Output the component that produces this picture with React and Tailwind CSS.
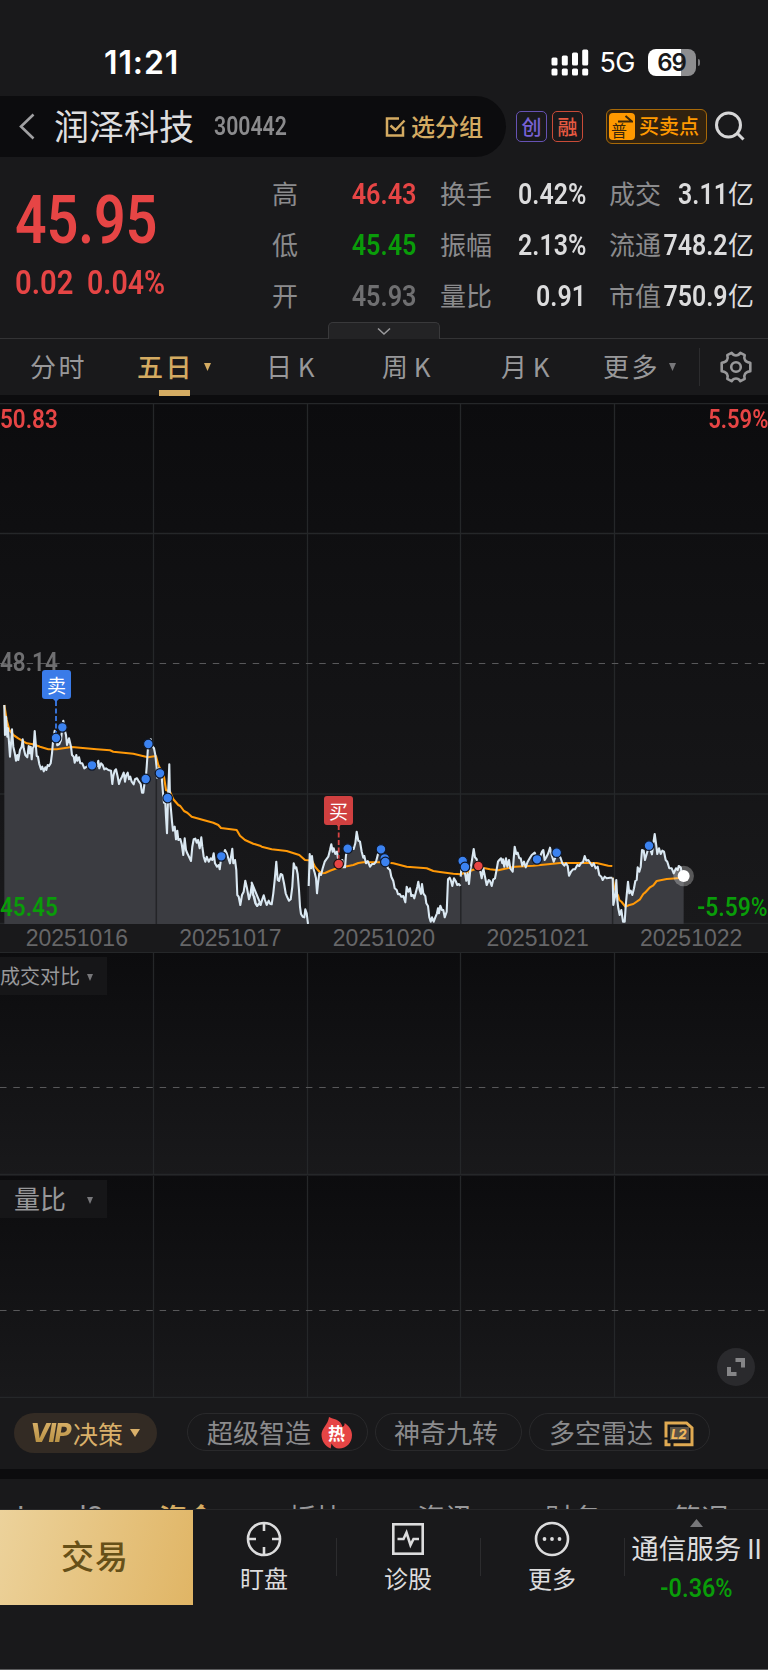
import React from 'react';

const parse = (dx, dy, text) =>
  text.trim().split(/\s+/).map((pair) => {
    const [x, y] = pair.split(',').map(Number);
    return [dx + x / 3, dy + y / 3];
  });

const toPath = (points) =>
  'M' + points.map(([x, y]) => `${x.toFixed(1)} ${y.toFixed(1)}`).join('L');

const FLOOR = 521;

const SESSIONS = [
  parse(0, 237, `13,195 15,285 18,230 22,290 24,265 28,320 30,350 34,300 36,268 40,320 44,338 48,362 52,345 55,360 60,330 65,320 68,298 71,325 76,345 82,352 86,318 89,340 92,320 95,358 98,325 101,320 104,273 107,310 110,348 114,350 118,372 123,388 127,380 131,394 136,382 139,390 143,375 147,378 152,370 156,340 159,305 164,272 168,295 172,316 178,312 183,300 187,262 190,242 194,270 198,285 201,315 207,295 213,320 216,345 221,350 224,368 229,345 232,362 237,352 241,370 247,370 253,385 260,380 268,376 276,376 284,385 291,378 295,362 298,385 303,370 308,375 313,388 318,385 325,390 333,392 337,432 340,408 344,392 348,388 353,410 357,432 361,420 366,410 371,398 375,425 379,405 383,398 387,418 391,410 395,425 401,433 405,418 411,415 417,425 422,432 426,458 430,458 433,435 437,417 440,380 443,335 445,312 452,298 456,318 462,325 466,345 470,385`),
  parse(0, 237, `470,385 471,413 476,385 480,400 485,410 489,460 492,488 495,470 498,530 501,580 504,475 508,373 510,480 513,510 516,545 519,572 524,560 528,598 532,572 535,600 541,597 545,612 550,645 554,595 558,630 562,640 567,650 573,663 577,620 581,598 586,596 590,608 594,600 599,625 604,592 607,620 611,650 616,665 620,650 626,665 632,655 637,660 641,640 645,670 651,680 656,675 659,688 664,650 670,645 675,630 680,640 685,655 690,670 697,626 700,670 705,660 709,690 712,765 716,770 721,795 726,765 731,755 736,722 741,745 747,778 751,765 756,730 760,765 766,790 771,798 780,788`).concat(
    parse(250, 377, `5,308 9,345 13,350 17,370 22,378 27,370 32,375 37,358 41,346 45,360 50,375 56,362 61,372 65,373 70,340 74,300 79,245 83,300 87,303 92,282 97,285 102,310 107,340 112,352 117,362 122,358 127,320 131,250 136,265 139,262 143,283 147,330 150,380 153,402 158,410 163,412 166,388 170,400 174,432`)),
  parse(250, 377, `176,318 179,222 183,265 186,228 190,265 194,278 198,295 201,340 204,310 208,280 213,285 218,265 224,245 229,238 235,230 240,210 244,193 248,215 251,205 256,222 261,215 266,250 272,240 277,240 280,262 285,262 288,225 293,205 300,200 311,207 316,190 320,155 325,182 330,185 335,215 340,233 343,228 348,250 353,243 360,260 366,252 372,252 378,245 384,222 393,208 400,225 405,240 409,250 414,265 420,270 424,290 430,303 434,325 440,330 444,343 449,342 454,350 460,348 466,367 470,320 475,335 480,325 484,348 489,345 493,355 498,335 502,320 505,305 509,330 513,342 516,312 520,340 526,348 529,370 534,378 538,412 542,425 546,412 551,425 556,412 561,400 564,385 567,400 571,377 576,390 580,390 584,412 590,395 594,298 599,293 604,305 607,318 612,295 617,303 622,315 627,312 631,318`),
  parse(250, 377, `632,290 636,245 640,265 645,280 649,302 653,280 657,312 661,270 666,240 671,207 675,232 680,238 685,258 690,270 695,295 700,265 705,290 710,315 716,300 720,303 725,318 730,298 735,295 740,268 744,245 748,240`).concat(
    parse(500, 377, `3,235 7,250 9,238 13,260 18,235 22,260 27,240 31,265 38,275 41,235 44,200 49,222 53,218 58,235 62,235 67,257 72,245 77,262 83,245 89,235 95,225 104,218 111,238 118,235 126,215 130,210 134,240 139,232 145,220 150,203 155,225 161,245 167,230 175,220 182,235 187,250 193,257 198,250 203,258 207,287 213,275 219,268 225,268 232,255 238,258 244,248 249,247 254,228 259,242 265,240 271,250 276,258 281,250 287,265 293,260 298,285 304,290 308,300 314,290 320,295 330,293 337,293`)),
  parse(500, 377, `338,293 340,375 345,350 349,300 352,360 355,385 359,405 364,390 369,425 374,425 377,378 380,345 384,305 388,340 392,332 397,345 402,325 406,303 410,300 413,262 418,275 422,260 426,210 431,212 435,240 440,222 447,197 456,223 460,190 464,162 468,190 472,222 477,205 482,222 487,212 492,215 497,240 502,245 508,265 515,265 521,280 528,265 533,270 536,258 542,262 547,290 551,288`),
];

const AVERAGES = [
  parse(0, 237, `13,195 20,240 28,270 40,285 55,295 80,310 100,313 120,320 145,328 170,328 215,321 240,323 290,328 330,331 340,335 400,341 444,352 468,348 475,375 485,395 492,410 498,450 510,455 520,478 535,495 541,498 552,513 562,518 575,530 610,540 640,548 655,555 663,564 710,570 720,587 735,600 760,611 780,617`).concat(
    parse(250, 377, `35,200 65,208 110,213 148,225 165,240 176,241 185,240 195,260 205,272 215,280 225,279 240,272 260,265 310,255 325,249 340,247 400,247 430,250 470,260 530,265 550,273 570,276 610,281 632,283 650,277 690,262 720,268 745,271`),
    parse(500, 377, `15,266 45,260 100,257 180,249 290,249 325,257 337,258`)),
  parse(500, 377, `338,293 342,320 350,340 354,346 358,360 365,366 376,380 386,376 400,372 420,358 430,342 435,338 450,322 460,316 470,303 500,297 551,293`),
];

const BLUE_MARKS = [
  ...parse(0, 237, '168,294 187,262 276,376 437,417 445,312 480,400 503,474 664,649'),
  ...parse(250, 377, '293,206 393,208 404,235 406,246 638,243 645,261'),
  ...parse(500, 377, '111,238 170,218 447,197'),
];
const RED_MARKS = parse(250, 377, '266,252 685,258');
const GRID_X = [153.5, 307.5, 460.5, 614.5];

function Num({ children, className = '' }) {
  return (
    <span className={`inline-block whitespace-nowrap font-[Roboto,sans-serif] font-semibold ${className}`}>
      {children}
    </span>
  );
}

function StatusBar() {
  return (
    <div className="flex h-24 shrink-0 items-start justify-between pl-[104px] pr-[68px] font-[Inter,sans-serif] text-white">
      <span className="mt-[43px] text-[32px] font-semibold leading-10 tracking-[0.9px]">11:21</span>
      <div className="mt-[42px] flex h-10 items-center">
        <svg width="38" height="27" viewBox="0 0 38 27" fill="#fff">
          <rect x="0.5" y="8.5" width="6" height="8" rx="1.5" />
          <rect x="10.8" y="6.5" width="6" height="10" rx="1.5" />
          <rect x="21" y="3.5" width="6" height="13" rx="1.5" />
          <rect x="31.2" y="0.5" width="6" height="16" rx="1.5" />
          <rect x="0.5" y="19.5" width="6" height="7" rx="1.5" />
          <rect x="10.8" y="19.5" width="6" height="7" rx="1.5" />
          <rect x="21" y="19.5" width="6" height="7" rx="1.5" />
          <rect x="31.2" y="19.5" width="6" height="7" rx="1.5" />
        </svg>
        <span className="ml-[11px] mt-[2px] w-[36px] text-[27px] leading-10 tracking-[-0.6px]">5G</span>
        <div className="ml-3 flex h-[27px] w-12 items-center justify-center rounded-[8px] bg-[linear-gradient(90deg,#fff_69%,#8d8d8f_69%)]">
          <span className="text-[24px] font-semibold leading-[27px] tracking-[-1px] text-[#19191b]">69</span>
        </div>
        <div className="ml-[2px] h-[7px] w-[2.5px] rounded-r-full bg-[#77777a]" />
      </div>
    </div>
  );
}

function Header() {
  return (
    <div className="flex h-[61px] shrink-0 items-center">
      <div className="flex h-full w-[506px] items-center rounded-r-full bg-[#0c0c0e]">
        <svg className="ml-[18px]" width="17" height="27" viewBox="0 0 17 27" fill="none" stroke="#a0a0a2" strokeWidth="2.6">
          <path d="M15.5 1.5 3 13.5 15.5 25.5" />
        </svg>
        <span className="ml-[19px] w-[140px] pb-[4px] text-[35px] leading-[57px] text-[#dededf]">润泽科技</span>
        <Num className="ml-5 w-[86px] origin-left scale-x-[0.85] text-[25px] leading-[61px] text-[#8b8b8d]">300442</Num>
        <svg className="ml-[84px]" width="22" height="22" viewBox="0 0 22 22" fill="none" stroke="#d4ab62" strokeWidth="2.5">
          <path d="M15 2.5H3v17h16v-9" />
          <path d="m6.500 9.500 5 4.500 9-9.500" />
        </svg>
        <span className="ml-[5px] pb-[2px] text-[24px] font-medium leading-[59px] text-[#d4ab62]">选分组</span>
      </div>
      <div className="ml-[10px] flex h-[31px] w-[31px] items-center justify-center rounded-[5px] border-[1.5px] border-[#6652b4] text-[20px] font-medium leading-[28px] text-[#7861d4]">创</div>
      <div className="ml-[5px] flex h-[31px] w-[31px] items-center justify-center rounded-[5px] border-[1.5px] border-[#c94b38] text-[20px] font-medium leading-[28px] text-[#e85a42]">融</div>
      <div className="ml-[23px] flex h-[35px] w-[101px] items-center rounded-[6px] border-[1.5px] border-[#a86908] bg-[#31220f] pl-[2px]">
        <div className="relative h-[27px] w-[26px] rounded-[4px] bg-[#ff9900] text-[#3a280c]">
          <span className="absolute left-[2px] top-[9px] text-[16px] leading-4">普</span>
          <svg className="absolute right-[2px] top-[2px]" width="15" height="8" viewBox="0 0 15 8" fill="none" stroke="#3a280c" strokeWidth="2"><path d="M0 6.500h14L7.500 1" /></svg>
        </div>
        <span className="ml-[4px] pb-[1px] text-[20px] font-medium leading-8 text-[#ff9900]">买卖点</span>
      </div>
      <svg className="ml-2" width="30" height="31" viewBox="0 0 30 31" fill="none" stroke="#d6d6d7" strokeWidth="3">
        <circle cx="13.500" cy="14" r="12" /><path d="m22 22 6.500 6.500" />
      </svg>
    </div>
  );
}

const STATS = [
  ['高', '46.43', 'text-[#e64545]', '换手', '0.42%', '成交', '3.11'],
  ['低', '45.45', 'text-[#0a9c0a]', '振幅', '2.13%', '流通', '748.2'],
  ['开', '45.93', 'text-[#6f6f71]', '量比', '0.91', '市值', '750.9'],
];

function Quote() {
  return (
    <div className="relative flex h-[182px] shrink-0 border-b border-[#333335]">
      <div className="flex w-[272px] flex-col pl-[15px] text-[#e64545]">
        <Num className="mt-[26px] origin-left scale-x-[0.84] text-[66px] leading-[76px]">45.95</Num>
        <div className="mt-[2px] flex">
          <Num className="w-[72px] origin-left scale-x-[0.86] text-[34px] leading-[42px]">0.02</Num>
          <Num className="origin-left scale-x-[0.84] text-[34px] leading-[42px]">0.04%</Num>
        </div>
      </div>
      <div className="mt-[10px] flex flex-col text-[26px] leading-[51px] text-[#8b8b8d]">
        {STATS.map(([a, av, color, b, bv, c, cv]) => (
          <div key={a} className="flex h-[51px] items-baseline">
            <span className="w-[60px]">{a}</span>
            <span className={`w-[85px] text-right ${color}`}><Num className="origin-right scale-x-[0.87] text-[29px]">{av}</Num></span>
            <span className="ml-[23px] w-[61px]">{b}</span>
            <span className="w-[85px] text-right text-[#dcdcdd]"><Num className="origin-right scale-x-[0.86] text-[29px]">{bv}</Num></span>
            <span className="ml-[23px] w-[54px]">{c}</span>
            <span className="flex w-[91px] items-baseline justify-end text-[#dcdcdd]">
              <Num className="origin-right scale-x-[0.86] text-[29px]">{cv}</Num>
              <span className="w-[26px]">亿</span>
            </span>
          </div>
        ))}
      </div>
      <div className="absolute bottom-[-1px] left-[328px] flex h-[17px] w-28 items-center justify-center rounded-t-[5px] border border-b-0 border-[#39393b] bg-[#232325]">
        <svg width="14" height="9" viewBox="0 0 14 9" fill="none" stroke="#9a9a9c" strokeWidth="1.6"><path d="m1 1.500 6 5.500 6-5.500" /></svg>
      </div>
    </div>
  );
}

function Caret({ className = '' }) {
  return <svg className={className} width="7" height="8" viewBox="0 0 7 8" fill="currentColor"><path d="M0 0h7L3.500 8z" /></svg>;
}

function PeriodTabs() {
  return (
    <div className="flex h-[56px] shrink-0 items-center text-[26px] leading-[54px] tracking-[2.5px] text-[#98989a]">
      <span className="ml-[30px] w-[107px] pb-[2px]">分时</span>
      <div className="relative flex w-[129px] items-center text-[#d4ab62]">
        <span className="pb-[2px] font-medium">五日</span>
        <Caret className="ml-[10px]" />
        <div className="absolute bottom-[-1px] left-[22px] h-[6px] w-[31px] bg-[#d4ab62]" />
      </div>
      <span className="w-[116px] whitespace-pre pb-[2px] tracking-[0]">日 K</span>
      <span className="w-[119px] whitespace-pre pb-[2px] tracking-[0]">周 K</span>
      <span className="w-[102px] whitespace-pre pb-[2px] tracking-[0]">月 K</span>
      <div className="flex w-[96px] items-center">
        <span className="pb-[2px]">更多</span>
        <Caret className="ml-[9px] text-[#77777a]" />
      </div>
      <div className="h-[38px] w-px bg-[#2c2c2e]" />
      <svg className="ml-[20px]" width="32" height="32" viewBox="0 0 32 32" fill="none" stroke="#98989a" strokeWidth="2.600" strokeLinejoin="round">
        <path d="M11.600 1.800c1.200 1.900 2.500 2.700 4.400 2.700s3.200-.8 4.400-2.700l4.300 2.400c-.8 2.300-.5 3.600.4 5 .9 1.400 2 2.200 5.200 2.500v8.600c-3.200.3-4.300 1.100-5.200 2.500-.9 1.400-1.200 2.700-.4 5l-4.300 2.400c-1.200-1.900-2.500-2.700-4.400-2.700s-3.200.8-4.400 2.700l-4.300-2.400c.8-2.300.5-3.600-.4-5-.9-1.400-2-2.200-5.200-2.500v-8.600c3.200-.3 4.300-1.100 5.200-2.500.9-1.400 1.200-2.700.4-5z" />
        <circle cx="16" cy="16" r="4.800" />
      </svg>
    </div>
  );
}

function Flag({ children, className }) {
  return (
    <div className={`absolute flex h-[29px] w-[29px] items-center justify-center rounded-[3px] text-[19px] leading-[28px] text-white ${className}`}>
      {children}
    </div>
  );
}

function PriceChart() {
  const last = SESSIONS[4][SESSIONS[4].length - 1];
  return (
    <div className="relative h-[521px] shrink-0 bg-linear-to-b from-[#0c0c0e] to-[#19191b] text-[25px] leading-[28px]">
      <svg className="block" width="768" height="521" viewBox="0 0 768 521" fill="none">
        <g stroke="#252729" strokeWidth="1.3">
          <path d="M0 .5H768M0 130.500H768M0 391H768M0 520.500H768" />
          {GRID_X.map((x) => <path key={x} d={`M${x} 0V521`} />)}
        </g>
        <path d="M0 260.500H768" stroke="#58585a" strokeWidth="1.200" strokeDasharray="6.500 6.800" />
        {SESSIONS.map((points, i) => (
          <path key={i} fill="#3b3c41" d={`${toPath(points)}L${points[points.length - 1][0]} ${FLOOR}L${points[0][0]} ${FLOOR}Z`} />
        ))}
        <path d="M156.300 362V521M307.800 483V521M460.800 483V521M612.600 475V521" stroke="#242528" strokeWidth="1.500" />
        <g stroke="#ff9908" strokeWidth="2.100" strokeLinejoin="round">
          {AVERAGES.map((points, i) => <path key={i} d={toPath(points)} />)}
        </g>
        <g stroke="#dae8f2" strokeWidth="2.100" strokeLinejoin="round">
          {SESSIONS.map((points, i) => <path key={i} d={toPath(points)} />)}
        </g>
        <path d="M56 298V331" stroke="#3a7be8" strokeWidth="1.800" strokeDasharray="5 2.500" />
        <path d="M53 296h6l-3 3z" fill="#3a7be8" />
        <path d="M338.700 422V457" stroke="#d64343" strokeWidth="1.800" strokeDasharray="5 2.500" />
        <path d="M335.700 421h6l-3 3z" fill="#d64343" />
        {BLUE_MARKS.map(([x, y]) => <circle key={`${x}-${y}`} cx={x} cy={y} r="4.800" fill="#3b82f0" stroke="#101828" strokeWidth="1.200" />)}
        {RED_MARKS.map(([x, y]) => <circle key={`${x}-${y}`} cx={x} cy={y} r="4.800" fill="#e64545" stroke="#201012" strokeWidth="1.200" />)}
        <circle cx={last[0]} cy={last[1]} r="10.300" fill="#fff" fillOpacity=".28" />
        <circle cx={last[0]} cy={last[1]} r="6" fill="#fff" />
      </svg>
      <Num className="absolute left-0 top-[3px] origin-left scale-x-[0.9] text-[#e64545]">50.83</Num>
      <Num className="absolute right-0 top-[3px] origin-right scale-x-[0.88] text-[#e64545]">5.59%</Num>
      <Num className="absolute left-0 top-[246px] origin-left scale-x-[0.9] text-[#6f6f71]">48.14</Num>
      <Num className="absolute left-0 top-[491px] origin-left scale-x-[0.9] text-[#0a9c0a]">45.45</Num>
      <Num className="absolute right-0 top-[491px] origin-right scale-x-[0.91] text-[#0a9c0a]">-5.59%</Num>
      <Flag className="left-[42px] top-[267px] bg-[#3a7be8]">卖</Flag>
      <Flag className="left-[324px] top-[393px] bg-[#d04040]">买</Flag>
    </div>
  );
}

function IndicatorPanel({ label, labelClass, sizeClass }) {
  return (
    <div className={`relative shrink-0 overflow-hidden bg-linear-to-b from-[#0c0c0e] to-[#19191b] ${sizeClass}`}>
      <svg className="block" width="768" height="223" viewBox="0 0 768 223" fill="none">
        <g stroke="#252729" strokeWidth="1.300">
          {GRID_X.map((x) => <path key={x} d={`M${x} 0V222`} />)}
          <path d="M0 221.500H768" strokeWidth="1.600" />
        </g>
        <path d="M0 134.500H768" stroke="#58585a" strokeWidth="1.200" strokeDasharray="6.500 6.800" />
      </svg>
      <div className="absolute left-0 top-[4px] flex h-[38px] w-[107px] items-center bg-[#161618] text-[#98989a]">
        <span className={labelClass}>{label}</span>
        <Caret className="mt-[2px] h-[7px] w-[6px] text-[#77777a]" />
      </div>
    </div>
  );
}

function Chips() {
  const chip = 'flex h-[38px] items-center rounded-full border border-[#29292b] text-[26px] leading-9 text-[#8b8b8d]';
  return (
    <div className="flex h-[71px] shrink-0 items-start pl-[14px] pt-[15px]">
      <div className="flex h-10 w-[143px] items-center rounded-full bg-[#332b24] pl-[16px] text-[#d9b06a]">
        <span className="inline-block w-[43px] bg-linear-to-b from-[#e6bd75] to-[#a98333] bg-clip-text font-[Inter,sans-serif] text-[26px] font-extrabold italic leading-10 tracking-[-1.500px] text-transparent">VIP</span>
        <span className="text-[25px] leading-10">决策</span>
        <svg className="ml-[7px]" width="10" height="8" viewBox="0 0 10 8" fill="currentColor"><path d="M0 0h10L5 8z" /></svg>
      </div>
      <div className={`ml-[30px] w-[181px] pl-[19px] ${chip}`}>
        <span className="w-[114px]">超级智造</span>
        <div className="relative mt-[2px] h-[32px] w-[31px]">
          <svg className="block" width="31" height="32" viewBox="0 0 31 32" fill="#e64545">
            <path d="M8 0c4 2 7 2 9.500 4 2.500 1.700 3.500 4 4 6 1.500-.6 2.200-2.200 2.200-4C28 9 31 13 31 18c0 8-5.500 13.500-13 13.500-3.500 0-5.500-1.800-7.500-5l-.8 5C4 29 .5 24 .5 17.500.5 11 7 8 8 0z" />
          </svg>
          <span className="absolute left-[7px] top-[6px] text-[17px] font-bold leading-[20px] text-white">热</span>
        </div>
      </div>
      <div className={`ml-[7px] w-[147px] pl-[18px] ${chip}`}>神奇九转</div>
      <div className={`ml-[7px] w-[181px] pl-[19px] ${chip}`}>
        <span className="w-[115px]">多空雷达</span>
        <div className="relative mt-[3px] h-[26px] w-[30px]">
          <svg className="block" width="30" height="26" viewBox="0 0 30 26" fill="none" stroke="#e0aa52" strokeWidth="3">
            <rect x="6" y="6" width="19" height="13" fill="#5b5347" stroke="none" />
            <path d="M2 16.500V2h20.500L28 7v16.800H9.500" /><path d="M2 18.500v5.300h4.500" />
          </svg>
          <span className="absolute left-[7px] top-[6px] font-[Inter,sans-serif] text-[13px] font-extrabold italic leading-[14px] text-[#f0b85c]">L2</span>
        </div>
      </div>
    </div>
  );
}

function SectionTabs() {
  return (
    <div className="h-[30px] shrink-0 overflow-hidden">
      <div className="mt-[21px] flex text-[28px] leading-[34px] text-[#98989a]">
        <span className="ml-[17px] w-[106px] font-[Roboto,sans-serif] text-[29px] tracking-[0.6px]">Level2</span>
        <span className="w-[128px] text-center font-bold text-[#d4ab62]">资金</span>
        <span className="w-[130px] text-center">板块</span>
        <span className="w-[128px] text-center">资讯</span>
        <span className="w-[128px] text-center">财务</span>
        <span className="w-[128px] text-center">简况</span>
      </div>
    </div>
  );
}

function NavItem({ label, children }) {
  return (
    <div className="flex w-[143px] flex-col items-center pr-px">
      <svg className="mt-[11px]" width="36" height="36" viewBox="0 0 36 36" fill="none" stroke="#dcdcdd" strokeWidth="2.600">{children}</svg>
      <span className="mt-[5px] text-[24px] leading-[32px] text-[#dcdcdd]">{label}</span>
    </div>
  );
}

function BottomBar() {
  const divider = 'mt-[28px] h-[38px] w-px bg-[#2c2c2e]';
  return (
    <div className="flex h-[160px] shrink-0 border-t border-[#262628]">
      <div className="flex h-[95px] w-[193px] items-center justify-center bg-[linear-gradient(105deg,#ecd29b,#e0b565)] pb-[3px] pr-[3px] text-[33px] font-medium tracking-[1px] text-[#665018]">交易</div>
      <NavItem label="盯盘">
        <circle cx="18" cy="18" r="16" /><path d="M18 2v8M18 26v8M2 18h8M26 18h8" />
      </NavItem>
      <div className={divider} />
      <NavItem label="诊股">
        <rect x="3.300" y="3.300" width="29.400" height="29.400" /><path d="M7.500 18h6l3-6.500 4 12.500 3-6h5.500" />
      </NavItem>
      <div className={divider} />
      <NavItem label="更多">
        <circle cx="18" cy="18" r="16" />
        <g fill="#dcdcdd" stroke="none"><circle cx="10.500" cy="18" r="1.900" /><circle cx="18" cy="18" r="1.900" /><circle cx="25.500" cy="18" r="1.900" /></g>
      </NavItem>
      <div className={divider} />
      <div className="flex w-[143px] flex-col items-center">
        <svg className="mt-[9px]" width="13" height="8" viewBox="0 0 13 8" fill="#77777a"><path d="M0 8 6.500 0 13 8z" /></svg>
        <span className="mt-[2px] whitespace-nowrap text-[27.500px] leading-[36px] text-[#dcdcdd]">通信服务<span className="ml-[6px] font-[Inter,sans-serif] text-[27px]">II</span></span>
        <Num className="mt-[5px] scale-x-[0.9] text-[26px] leading-[30px] text-[#0a9c0a]">-0.36%</Num>
      </div>
    </div>
  );
}

export default function App() {
  return (
    <div className="relative flex h-[1670px] w-[768px] flex-col overflow-hidden bg-[#19191b] font-['Noto_Sans_CJK_SC',sans-serif]">
      <StatusBar />
      <Header />
      <Quote />
      <PeriodTabs />
      <div className="h-[8px] shrink-0 bg-[#0c0c0e]" />
      <PriceChart />
      <div className="flex h-[29px] shrink-0 border-b border-[#252729] font-['Liberation_Sans',sans-serif] text-[23px] leading-[29px] text-[#666668]">
        {['20251016', '20251017', '20251020', '20251021', '20251022'].map((day) => (
          <span key={day} className="flex-1 text-center">{day}</span>
        ))}
      </div>
      <IndicatorPanel label="成交对比" sizeClass="h-[223px]" labelClass="w-[87px] whitespace-nowrap text-[20px]" />
      <IndicatorPanel label="量比" sizeClass="h-[222px]" labelClass="w-[87px] whitespace-nowrap pb-[3px] pl-[14px] text-[26px]" />
      <Chips />
      <div className="h-[10px] shrink-0 bg-[#0c0c0e]" />
      <SectionTabs />
      <BottomBar />
      <div className="h-px shrink-0 bg-[#5c5c5e]" />
      <button aria-label="全屏" className="absolute left-[717px] top-[1348px] flex h-[38px] w-[38px] items-center justify-center rounded-full bg-[#2a2a2d]">
        <svg width="18" height="18" viewBox="0 0 18 18" fill="none" stroke="#858587" strokeWidth="4"><path d="M8.500 2H16V9.500M2 9v7h7.500" /></svg>
      </button>
    </div>
  );
}
